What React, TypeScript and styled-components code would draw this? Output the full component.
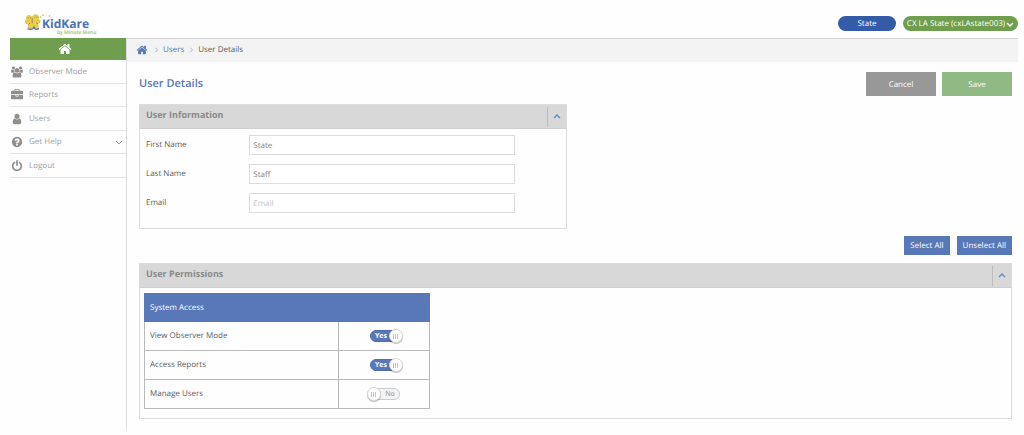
import React, { useState } from "react";
import styled, { createGlobalStyle } from "styled-components";

const blue = "#5878b8";
const green = "#6f9f4e";

const GlobalStyle = createGlobalStyle`
  *, *::before, *::after { box-sizing: border-box; }
  body {
    margin: 0;
    background: #fefefe;
    color: #5c5c5c;
    font: 8px/12px "Open Sans", "Noto Sans", sans-serif;
    text-rendering: geometricPrecision;
  }
  button, input { font: inherit; text-rendering: inherit; }
  button { cursor: pointer; }
  a { color: inherit; text-decoration: none; }
`;

const Page = styled.div`
  display: flex;
  flex-direction: column;
  min-height: 100vh;
  padding: 0 6px 5px 10px;
`;

const Header = styled.header`
  display: flex;
  align-items: flex-end;
  justify-content: space-between;
  height: 38px;
`;

const Logo = styled.a`
  display: flex;
  align-items: flex-start;
  margin-left: 15px;
  height: 24px;
`;

const LogoMarkSlot = styled.span`
  display: flex;
  width: 17px;
`;

const LogoWords = styled.span`
  display: flex;
  flex-direction: column;
  padding-top: 3px;
`;

const Brand = styled.span`
  color: #4a72b4;
  font-size: 12px;
  line-height: 13px;
  font-weight: 700;
`;

const Tagline = styled.span`
  margin-left: 15px;
  color: #8fc063;
  font-size: 5px;
  line-height: 6px;
  font-weight: 600;
`;

const Account = styled.div`
  display: flex;
  gap: 7px;
  padding-bottom: 7px;
`;

const Pill = styled.button<{ $tone: string; $wide?: boolean }>`
  display: flex;
  align-items: center;
  justify-content: center;
  gap: 1px;
  width: ${(p) => (p.$wide ? "115px" : "58px")};
  height: 15px;
  padding: 0;
  border: 0;
  border-radius: 8px;
  background: ${(p) => p.$tone};
  color: #fff;
  white-space: nowrap;
`;

const Columns = styled.div`
  display: flex;
  flex: 1;
`;

const Sidebar = styled.nav`
  flex: none;
  width: 117px;
  border-right: 1px solid #dcdcdc;
`;

const HomeTile = styled.a`
  display: flex;
  align-items: center;
  justify-content: center;
  height: 22px;
  padding: 0 7px 1px 0;
  background: ${green};
  color: #fff;
`;

const NavList = styled.ul`
  margin: 0;
  padding: 0;
  list-style: none;
`;

const NavItem = styled.li`
  height: 24px;
  border-bottom: 1px solid #e4e4e4;
  &:nth-child(even) { height: 23px; }
`;

const NavLink = styled.a`
  display: flex;
  align-items: center;
  height: 100%;
  padding: 0 3px 0 1px;
  color: #a0a0a0;
  & > svg:first-child { color: #8f8f8f; }
`;

const NavText = styled.span`
  flex: 1;
  margin-left: 6px;
`;

const Main = styled.main`
  flex: 1;
  min-width: 0;
`;

const Breadcrumb = styled.nav`
  display: flex;
  align-items: center;
  gap: 4px;
  height: 24px;
  padding: 0 0 2px 9px;
  border-top: 1px solid #d4d4d4;
  background: #f3f3f3;
  color: ${blue};
`;

const CrumbHome = styled.a`
  display: flex;
  margin-right: 1px;
`;

const Crumb = styled.span`
  color: #5c5c5c;
`;

const Content = styled.div`
  padding: 10px 6px 12px 12px;
`;

const TitleRow = styled.div`
  display: flex;
  align-items: center;
  gap: 6px;
  margin-bottom: 8px;
`;

const Title = styled.h1`
  flex: 1;
  margin: 0;
  color: ${blue};
  font-size: 11px;
  line-height: 16px;
  font-weight: 600;
`;

const ActionButton = styled.button<{ $tone: string }>`
  width: 70px;
  height: 24px;
  padding: 1px 0 0;
  border: 0;
  background: ${(p) => p.$tone};
  color: #fff;
`;

const Panel = styled.section<{ $half?: boolean }>`
  width: ${(p) => (p.$half ? "49%" : "100%")};
  border: 1px solid #dcdcdc;
`;

const PanelHead = styled.header`
  display: flex;
  align-items: center;
  justify-content: space-between;
  height: 24px;
  padding-left: 6px;
  background: #d8d8d8;
  border-bottom: 1px solid #cfcfcf;
`;

const PanelTitle = styled.h2`
  margin: 0;
  padding-bottom: 3px;
  color: #8a8a8a;
  font-size: 9px;
  line-height: 14px;
  font-weight: 700;
`;

const Collapse = styled.button`
  display: flex;
  align-items: center;
  justify-content: center;
  width: 19px;
  height: 20px;
  padding: 0 0 2px;
  border: 0;
  border-left: 1px solid #bdbdbd;
  background: none;
  color: #5f8fc4;
`;

const Fields = styled.form`
  display: grid;
  gap: 9px;
  padding: 6px 51px 15px 6px;
`;

const Field = styled.div`
  display: grid;
  grid-template-columns: 28% 1fr;
  align-items: center;
`;

const TextBox = styled.input`
  width: 100%;
  height: 20px;
  padding: 0 3px;
  border: 1px solid #dcdcdc;
  border-radius: 0;
  background: #fff;
  color: #858585;
  &::placeholder { color: #c4c4c4; opacity: 1; }
`;

const BulkRow = styled.div`
  display: flex;
  justify-content: flex-end;
  gap: 7px;
  margin: 7px 0 8px;
`;

const BulkButton = styled.button`
  height: 19px;
  padding: 0 6px;
  border: 0;
  background: ${blue};
  color: #fff;
`;

const PanelBody = styled.div`
  padding: 5px 4px 9px;
`;

const Permissions = styled.table`
  width: 33%;
  min-width: 286px;
  border-collapse: collapse;
  color: #5c5c5c;
`;

const HeadCell = styled.th`
  height: 28px;
  padding: 0 5px;
  border: 1px solid ${blue};
  background: ${blue};
  color: #fff;
  font-weight: 400;
  text-align: left;
`;

const Cell = styled.td<{ $toggle?: boolean }>`
  width: ${(p) => (p.$toggle ? "32%" : "68%")};
  height: 29px;
  padding: ${(p) => (p.$toggle ? "0 4px 0 6px" : "0 5px")};
  border: 1px solid #b9b9b9;
`;

const Switch = styled.label`
  position: relative;
  display: block;
  width: 36px;
  height: 14px;
  margin: 0 auto;
  padding-top: 1px;
  cursor: pointer;
`;

const SwitchInput = styled.input`
  position: absolute;
  inset: 0;
  width: 100%;
  height: 100%;
  margin: 0;
  opacity: 0;
`;

const Track = styled.span<{ $on: boolean }>`
  display: flex;
  align-items: center;
  justify-content: ${(p) => (p.$on ? "flex-start" : "flex-end")};
  height: 12px;
  margin: 0 3px;
  padding: 1px 4px 0;
  border: 1px solid ${(p) => (p.$on ? "#4e6eae" : "#cccccc")};
  border-radius: 6px;
  background: ${(p) => (p.$on ? blue : "#f4f4f4")};
  color: ${(p) => (p.$on ? "#fff" : "#a6a6a6")};
  font-size: 7px;
  line-height: 9px;
  font-weight: ${(p) => (p.$on ? 700 : 600)};
`;

const Knob = styled.span<{ $on: boolean }>`
  position: absolute;
  top: 0;
  left: ${(p) => (p.$on ? "22px" : "0")};
  display: flex;
  align-items: center;
  justify-content: center;
  gap: 1px;
  width: 14px;
  height: 14px;
  border: 1px solid #d4d4d4;
  border-radius: 50%;
  background: #fff;
  box-shadow: 0 1px 1px rgba(0, 0, 0, 0.25);
`;

const Grip = styled.i`
  width: 1px;
  height: 5px;
  background: #c4c4c4;
`;

const icons = {
  home: "M1472 992v480q0 26-19 45t-45 19h-384v-384h-256v384h-384q-26 0-45-19t-19-45v-480q0-1 .5-3t.5-3l575-474 575 474q1 2 1 6zm223-69l-62 74q-8 9-21 11h-3q-13 0-21-7l-692-577-692 577q-12 8-24 7-13-2-21-11l-62-74q-8-10-7-23.5t11-21.5l719-599q32-26 76-26t76 26l244 204v-195q0-14 9-23t23-9h192q14 0 23 9t9 23v408l219 182q10 8 11 21.5t-7 23.5z",
  users:
    "M593 896q-162 5-265 128h-134q-82 0-138-40.5t-56-118.5q0-353 124-353 6 0 43.5 21t97.5 42.5 119 21.5q67 0 133-23-5 37-5 66 0 139 81 256zm1071 637q0 120-73 189.5t-194 69.5h-874q-121 0-194-69.5t-73-189.5q0-53 3.5-103.5t14-109 26.5-108.5 43-97.5 62-81 85.5-53.5 111.5-20q10 0 43 21.5t73 48 107 48 135 21.5 135-21.5 107-48 73-48 43-21.5q61 0 111.5 20t85.5 53.5 62 81 43 97.5 26.5 108.5 14 109 3.5 103.5zm-1024-1277q0 106-75 181t-181 75-181-75-75-181 75-181 181-75 181 75 75 181zm704 384q0 159-112.5 271.5t-271.5 112.5-271.5-112.5-112.5-271.5 112.5-271.5 271.5-112.5 271.5 112.5 112.5 271.5zm576 225q0 78-56 118.5t-138 40.5h-134q-103-123-265-128 81-117 81-256 0-29-5-66 66 23 133 23 59 0 119-21.5t97.5-42.5 43.5-21q124 0 124 353zm-128-609q0 106-75 181t-181 75-181-75-75-181 75-181 181-75 181 75 75 181z",
  briefcase:
    "M640 256h512v-128h-512v128zm1152 640v480q0 66-47 113t-113 47h-1472q-66 0-113-47t-47-113v-480h672v160q0 26 19 45t45 19h320q26 0 45-19t19-45v-160h672zm-768 0v128h-256v-128h256zm768-480v384h-1792v-384q0-66 47-113t113-47h352v-160q0-40 28-68t68-28h576q40 0 68 28t28 68v160h352q66 0 113 47t47 113z",
  user: "M1536 1399q0 109-62.5 187t-150.5 78h-854q-88 0-150.5-78t-62.5-187q0-85 8.5-160.5t31.5-152 58.5-131 94-89 134.5-34.5q131 128 313 128t313-128q76 0 134.5 34.5t94 89 58.5 131 31.5 152 8.5 160.5zm-256-887q0 159-112.5 271.5t-271.5 112.5-271.5-112.5-112.5-271.5 112.5-271.5 271.5-112.5 271.5 112.5 112.5 271.5z",
  help: "M1024 1376v-192q0-14-9-23t-23-9h-192q-14 0-23 9t-9 23v192q0 14 9 23t23 9h192q14 0 23-9t9-23zm256-672q0-88-55.5-163t-138.5-116-170-41q-243 0-371 213-15 24 8 42l132 100q7 6 19 6 16 0 25-12 53-68 86-92 34-24 86-24 48 0 85.5 26t37.5 59q0 38-20 61t-68 45q-63 28-115.5 86.5t-52.5 125.5v36q0 14 9 23t23 9h192q14 0 23-9t9-23q0-19 21.5-49.5t54.5-49.5q32-18 49-28.5t46-35 44.5-48 28-60.5 12.5-81zm384 192q0 209-103 385.5t-279.5 279.5-385.5 103-385.5-103-279.5-279.5-103-385.5 103-385.5 279.5-279.5 385.5-103 385.5 103 279.5 279.5 103 385.5z",
  power:
    "M1664 896q0 156-61 298t-164 245-245 164-298 61-298-61-245-164-164-245-61-298q0-182 80.5-343t226.5-270q43-32 95.5-25t83.5 50q32 42 24.5 94.5t-49.5 84.5q-98 74-151.5 181t-53.5 228q0 104 40.5 198.5t109.5 163.5 163.5 109.5 198.5 40.5 198.5-40.5 163.5-109.5 109.5-163.5 40.5-198.5q0-121-53.5-228t-151.5-181q-42-32-49.5-84.5t24.5-94.5q31-43 84-50t95 25q146 109 226.5 270t80.5 343zm-640-768v640q0 52-38 90t-90 38-90-38-38-90v-640q0-52 38-90t90-38 90 38 38 90z",
};

type IconName = keyof typeof icons;

function Icon({ name, size }: { name: IconName; size: number }) {
  return (
    <svg
      width={size}
      height={size}
      viewBox={name === "users" ? "0 0 1920 1792" : "0 0 1792 1792"}
      fill="currentColor"
      aria-hidden="true"
    >
      <path d={icons[name]} />
    </svg>
  );
}

const chevrons = { up: "M1 6l3-3 3 3", down: "M1 3l3 3 3-3", right: "M3 1l3 3-3 3" };

function Chevron({
  to,
  size = 8,
  weight = 1,
  color = "currentColor",
}: {
  to: keyof typeof chevrons;
  size?: number;
  weight?: number;
  color?: string;
}) {
  return (
    <svg width={size} height={size} viewBox="0 0 8 8" fill="none" stroke={color} strokeWidth={weight} aria-hidden="true">
      <path d={chevrons[to]} />
    </svg>
  );
}

function LogoMark() {
  return (
    <svg width="28" height="18" viewBox="0 0 28 18" aria-hidden="true" overflow="visible">
      <path
        d="M1.500 3.500C1.800 0.800 5.500 0.800 6.300 2.800L7.300 3.400C8 -0.200 13 -0.200 13.500 3C13.800 4.800 13.200 5.800 12.200 6.500L14.800 6L15.200 8L12.800 9.800L13.500 14.500L10 15L9 12.500L8 14.800L3 14.500L3.500 10.500L0.800 9L0.300 6.500L2.500 6.800C1.600 5.800 1.300 4.800 1.500 3.500Z"
        fill="#f0cf3c"
        stroke="#c9ac3c"
        strokeWidth="0.600"
      />
      <path d="M2.500 14.800Q5.500 16 8 14.800L9 12.800L10 15Q12 15.800 14 14.500" fill="none" stroke="#4a72b4" strokeWidth="1.200" />
      <path d="M7.200 4V9.500M3 3.800h1M5 3.800h1M9.500 3.200h1M11.500 3.200h1M3.500 10.500L5 9M12.800 9.800L11 8.500" stroke="#6f7d7a" strokeWidth="0.800" />
      <circle cx="15.500" cy="3" r="0.800" fill="#8fc063" />
      <circle cx="18" cy="1.200" r="0.800" fill="#8fc063" />
      <circle cx="21.500" cy="1" r="0.600" fill="#f0cf3c" />
      <circle cx="24.500" cy="2" r="0.800" fill="#8fc063" />
    </svg>
  );
}

const navItems: { icon: IconName; label: string; expandable?: boolean }[] = [
  { icon: "users", label: "Observer Mode" },
  { icon: "briefcase", label: "Reports" },
  { icon: "user", label: "Users" },
  { icon: "help", label: "Get Help", expandable: true },
  { icon: "power", label: "Logout" },
];

const fields = [
  { id: "first-name", label: "First Name", value: "State" },
  { id: "last-name", label: "Last Name", value: "Staff" },
  { id: "email", label: "Email", value: "", placeholder: "Email" },
];

const permissionNames = ["View Observer Mode", "Access Reports", "Manage Users"];

function PanelHeader({ title }: { title: string }) {
  return (
    <PanelHead>
      <PanelTitle>{title}</PanelTitle>
      <Collapse type="button" aria-label={`Collapse ${title}`}>
        <Chevron to="up" weight={1.5} />
      </Collapse>
    </PanelHead>
  );
}

export default function App() {
  const [granted, setGranted] = useState([true, true, false]);
  const setAll = (on: boolean) => setGranted(permissionNames.map(() => on));

  return (
    <Page>
      <GlobalStyle />
      <Header>
        <Logo href="#">
          <LogoMarkSlot>
            <LogoMark />
          </LogoMarkSlot>
          <LogoWords>
            <Brand>KidKare</Brand>
            <Tagline>by Minute Menu</Tagline>
          </LogoWords>
        </Logo>
        <Account>
          <Pill type="button" $tone="#345ba8">
            State
          </Pill>
          <Pill type="button" $tone={green} $wide>
            CX LA State (cxLAstate003)
            <Chevron to="down" weight={1.5} />
          </Pill>
        </Account>
      </Header>
      <Columns>
        <Sidebar>
          <HomeTile href="#" aria-label="Home">
            <Icon name="home" size={14} />
          </HomeTile>
          <NavList>
            {navItems.map((item) => (
              <NavItem key={item.label}>
                <NavLink href="#">
                  <Icon name={item.icon} size={12} />
                  <NavText>{item.label}</NavText>
                  {item.expandable && <Chevron to="down" />}
                </NavLink>
              </NavItem>
            ))}
          </NavList>
        </Sidebar>
        <Main>
          <Breadcrumb aria-label="Breadcrumb">
            <CrumbHome href="#" aria-label="Home">
              <Icon name="home" size={12} />
            </CrumbHome>
            <Chevron to="right" size={6} color="#a0a0a0" />
            <a href="#">Users</a>
            <Chevron to="right" size={6} color="#a0a0a0" />
            <Crumb>User Details</Crumb>
          </Breadcrumb>
          <Content>
            <TitleRow>
              <Title>User Details</Title>
              <ActionButton type="button" $tone="#989898">
                Cancel
              </ActionButton>
              <ActionButton type="button" $tone="#90b984">
                Save
              </ActionButton>
            </TitleRow>
            <Panel $half>
              <PanelHeader title="User Information" />
              <Fields>
                {fields.map((f) => (
                  <Field key={f.id}>
                    <label htmlFor={f.id}>{f.label}</label>
                    <TextBox id={f.id} type="text" defaultValue={f.value} placeholder={f.placeholder} />
                  </Field>
                ))}
              </Fields>
            </Panel>
            <BulkRow>
              <BulkButton type="button" onClick={() => setAll(true)}>
                Select All
              </BulkButton>
              <BulkButton type="button" onClick={() => setAll(false)}>
                Unselect All
              </BulkButton>
            </BulkRow>
            <Panel>
              <PanelHeader title="User Permissions" />
              <PanelBody>
                <Permissions>
                  <thead>
                    <tr>
                      <HeadCell colSpan={2}>System Access</HeadCell>
                    </tr>
                  </thead>
                  <tbody>
                    {permissionNames.map((name, i) => (
                      <tr key={name}>
                        <Cell>{name}</Cell>
                        <Cell $toggle>
                          <Switch>
                            <Track $on={granted[i]}>{granted[i] ? "Yes" : "No"}</Track>
                            <Knob $on={granted[i]}>
                              <Grip />
                              <Grip />
                              <Grip />
                            </Knob>
                            <SwitchInput
                              type="checkbox"
                              aria-label={name}
                              checked={granted[i]}
                              onChange={() => setGranted(granted.map((v, j) => (j === i ? !v : v)))}
                            />
                          </Switch>
                        </Cell>
                      </tr>
                    ))}
                  </tbody>
                </Permissions>
              </PanelBody>
            </Panel>
          </Content>
        </Main>
      </Columns>
    </Page>
  );
}
